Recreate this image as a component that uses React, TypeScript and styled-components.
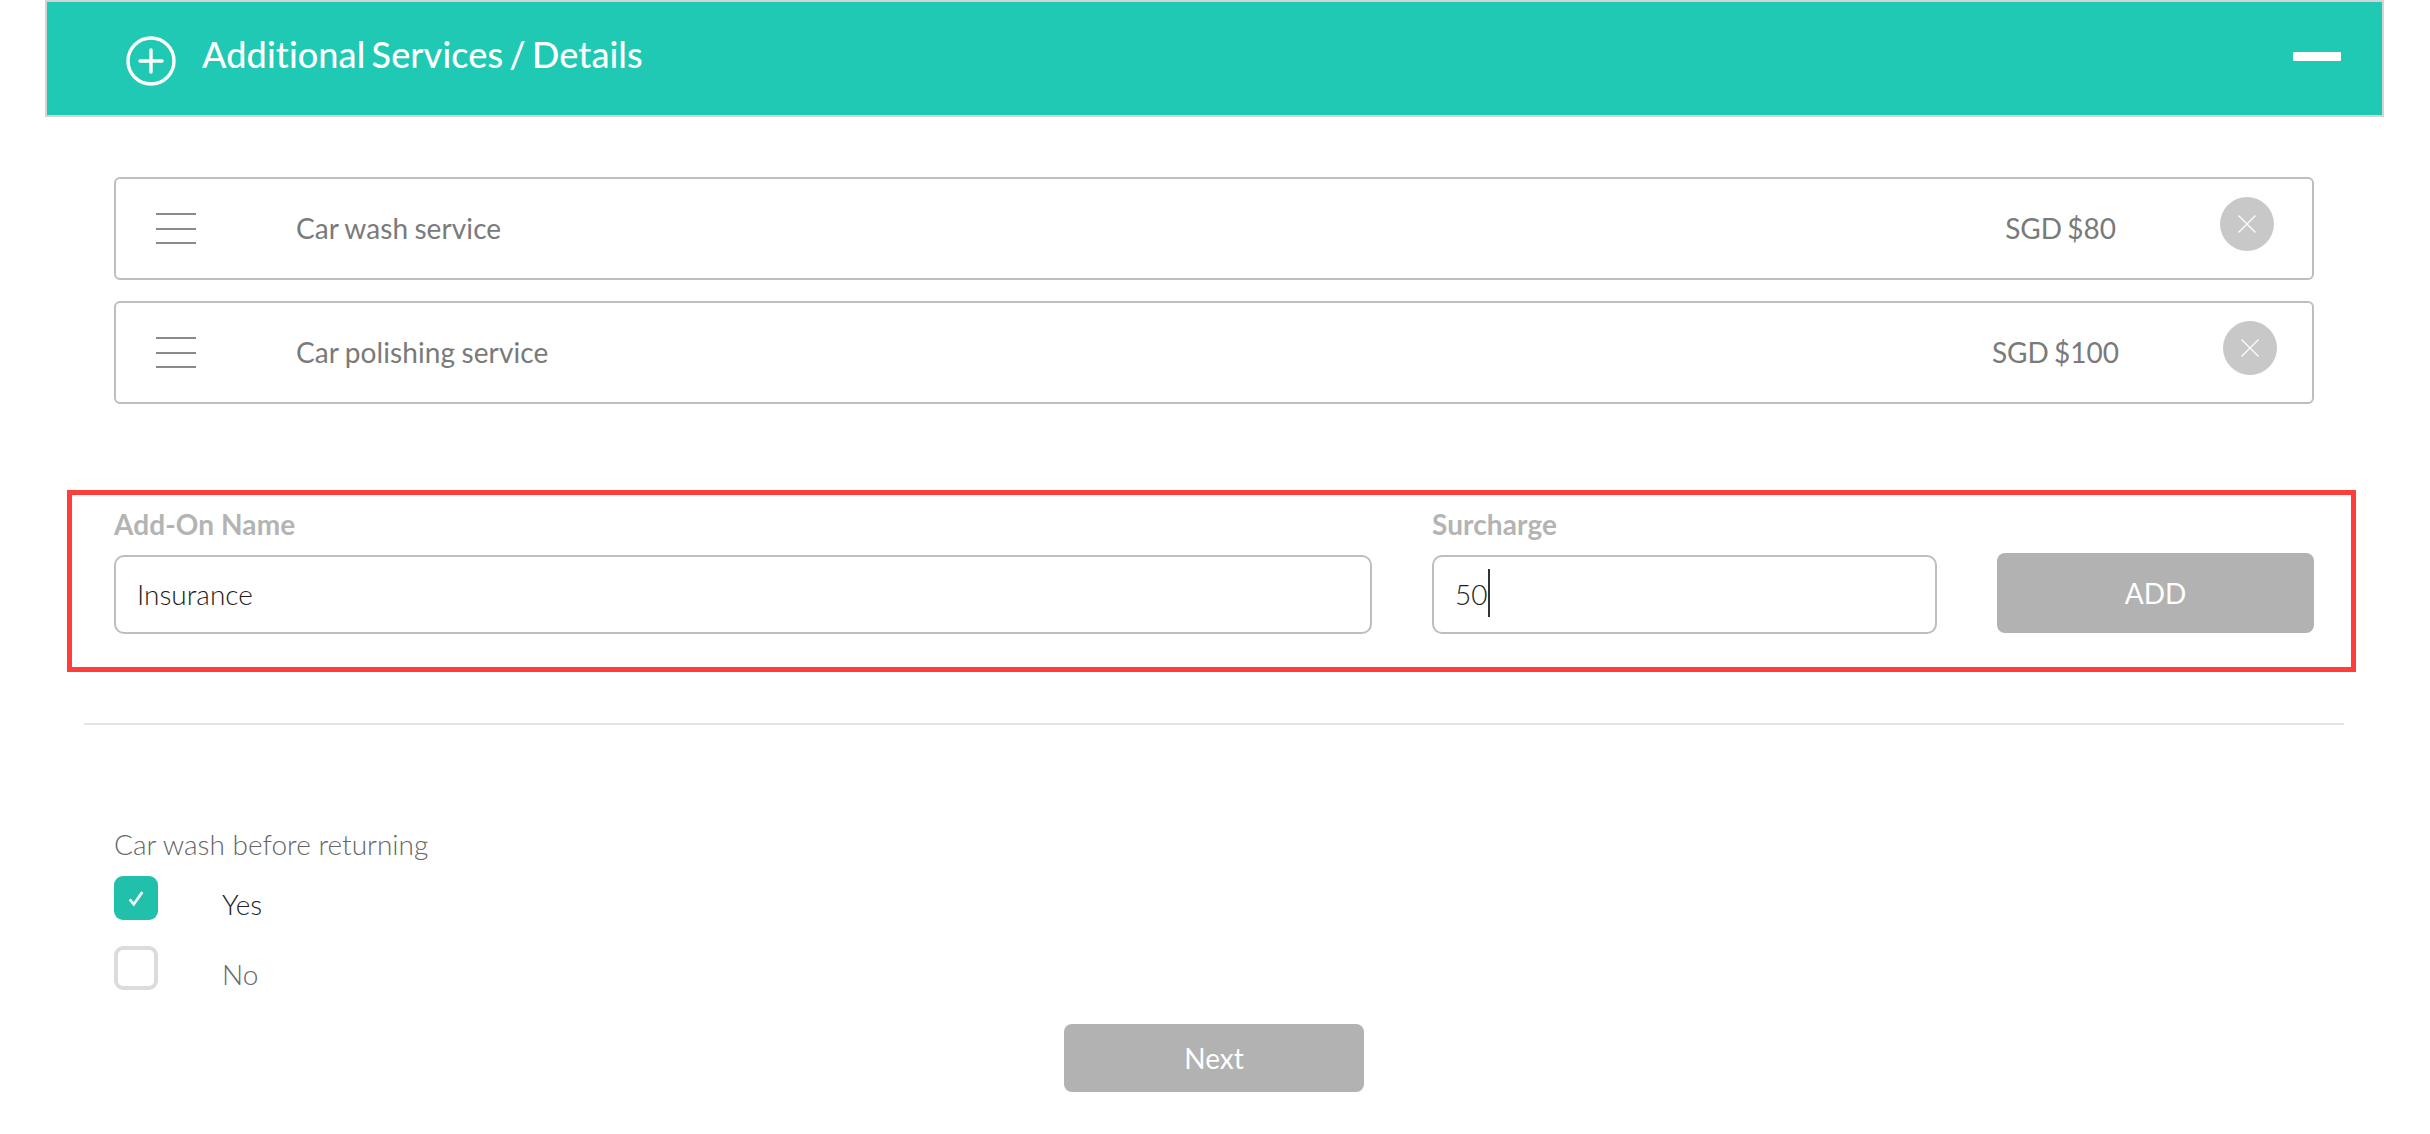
import React from "react";
import styled, { createGlobalStyle } from "styled-components";

const Global = createGlobalStyle`
  html, body { margin: 0; padding: 0; background: #fff; }
  body { font-family: Lato, "Open Sans", "Liberation Sans", sans-serif; }
  * { box-sizing: border-box; }
`;

const Page = styled.div`
  width: 2430px;
  height: 1134px;
  padding: 0 46px 0 45px;
  overflow: hidden;
`;

const Header = styled.header`
  height: 117px;
  display: flex;
  align-items: center;
  background: #20c9b3;
  border: 2px solid #d4d4d4;
  padding: 0 41px 0 79px;
  color: #fff;
`;

const HeaderIcon = styled.svg`
  width: 50px;
  height: 50px;
  margin-top: 4px;
  flex: none;
`;

const Title = styled.h1`
  flex: 1;
  margin: -9px 0 0 26px;
  font-size: 36px;
  font-weight: 500;
  line-height: 44px;
  letter-spacing: 0.1px;
  word-spacing: -3px;
`;

const Collapse = styled.span`
  width: 48px;
  height: 9px;
  background: #fff;
  border-radius: 1px;
  margin-top: -4px;
`;

const Content = styled.main`
  padding: 60px 70px 0 69px;
`;

const List = styled.div`
  display: flex;
  flex-direction: column;
  gap: 21px;
`;

const Card = styled.div<{ $inset: number }>`
  height: 103px;
  display: flex;
  align-items: center;
  border: 2px solid #bebebe;
  border-radius: 6px;
  padding: 0 ${(p) => p.$inset}px 0 40px;
`;

const Burger = styled.span`
  width: 40px;
  height: 31px;
  flex: none;
  display: flex;
  flex-direction: column;
  justify-content: space-between;

  i {
    display: block;
    height: 2px;
    background: #8a8a8a;
  }
`;

const ItemName = styled.span`
  flex: 1;
  margin: -2px 0 0 100px;
  font-size: 28px;
  line-height: 34px;
  color: #7a7a7a;
  letter-spacing: 0.1px;
  word-spacing: -1px;
`;

const Price = styled.span`
  margin-top: -2px;
  font-size: 28px;
  line-height: 34px;
  color: #7a7a7a;
  word-spacing: -2px;
`;

const Remove = styled.span`
  width: 54px;
  height: 54px;
  flex: none;
  margin: -9px 0 0 104px;
  border-radius: 50%;
  background: #c8c8c8;
  display: flex;
  align-items: center;
  justify-content: center;
`;

const Highlight = styled.section`
  margin: 86px -42px 0 -47px;
  height: 182px;
  border: 5px solid #ff3e3c;
  padding: 0 37px 0 42px;
  display: grid;
  grid-template-columns: 1258px 505px 317px;
  column-gap: 60px;
`;

const FieldGroup = styled.div`
  display: flex;
  flex-direction: column;
`;

const FieldLabel = styled.label`
  height: 60px;
  padding-top: 12px;
  font-size: 28px;
  font-weight: 700;
  line-height: 34px;
  color: #b4b4b4;
  letter-spacing: 0.1px;
`;

const Field = styled.div`
  height: 79px;
  display: flex;
  align-items: center;
  border: 2px solid #bebebe;
  border-radius: 10px;
  padding: 0 21px 2px;
  font-size: 28px;
  font-weight: 300;
  color: #1c1c1c;
`;

const Caret = styled.span`
  width: 2px;
  height: 48px;
  margin-left: 1px;
  margin-top: -1px;
  background: #333;
`;

const ActionButton = styled.button`
  border: 0;
  border-radius: 8px;
  background: #b2b2b2;
  color: #fff;
  font-family: inherit;
  font-size: 28px;
  font-weight: 400;
  padding: 0;
`;

const AddButton = styled(ActionButton)`
  height: 80px;
  margin-top: 58px;
`;

const Divider = styled.hr`
  margin: 51px -30px 0 -30px;
  border: 0;
  height: 2px;
  background: #e3e3e3;
`;

const Options = styled.div`
  margin-top: 101px;
`;

const OptionsTitle = styled.div`
  font-size: 28px;
  font-weight: 300;
  line-height: 36px;
  color: #666;
  margin-bottom: 14px;
`;

const Option = styled.div`
  height: 70px;
  display: flex;
  align-items: flex-start;
`;

const Box = styled.span<{ $checked?: boolean }>`
  width: 44px;
  height: 44px;
  flex: none;
  border-radius: 9px;
  display: flex;
  align-items: center;
  justify-content: center;
  background: ${(p) => (p.$checked ? "#20c0ab" : "#fff")};
  border: ${(p) => (p.$checked ? "0" : "4px solid #dcdcdc")};
`;

const OptionText = styled.span<{ $muted?: boolean }>`
  margin: 11px 0 0 64px;
  font-size: 28px;
  font-weight: 300;
  line-height: 34px;
  color: ${(p) => (p.$muted ? "#666" : "#222")};
`;

const Footer = styled.div`
  display: flex;
  justify-content: center;
  margin-top: -3px;
`;

const NextButton = styled(ActionButton)`
  width: 300px;
  height: 68px;
  margin-top: 11px;
`;

const PlusCircle = () => (
  <HeaderIcon viewBox="0 0 50 50" fill="none" stroke="#fff" strokeWidth="3.4">
    <circle cx="25" cy="25" r="23" />
    <path d="M25 14v22M14 25h22" strokeLinecap="round" />
  </HeaderIcon>
);

const Cross = () => (
  <svg width="18" height="18" viewBox="0 0 18 18" stroke="#fff" strokeWidth="1.2">
    <path d="M0.5 0.5l17 17M17.5 0.5l-17 17" />
  </svg>
);

const Check = () => (
  <svg width="18" height="18" viewBox="0 0 20 20" fill="none" stroke="#f4fbfa" strokeWidth="3">
    <path d="M3 11.5l4.5 5.5L17 3.5" />
  </svg>
);

const items = [
  { name: "Car wash service", price: "SGD $80", inset: 38 },
  { name: "Car polishing service", price: "SGD $100", inset: 35 },
];

export default function App() {
  return (
    <Page>
      <Global />
      <Header>
        <PlusCircle />
        <Title>Additional Services / Details</Title>
        <Collapse />
      </Header>
      <Content>
        <List>
          {items.map((item) => (
            <Card key={item.name} $inset={item.inset}>
              <Burger>
                <i />
                <i />
                <i />
              </Burger>
              <ItemName>{item.name}</ItemName>
              <Price>{item.price}</Price>
              <Remove>
                <Cross />
              </Remove>
            </Card>
          ))}
        </List>
        <Highlight>
          <FieldGroup>
            <FieldLabel>Add-On Name</FieldLabel>
            <Field>Insurance</Field>
          </FieldGroup>
          <FieldGroup>
            <FieldLabel>Surcharge</FieldLabel>
            <Field>
              50
              <Caret />
            </Field>
          </FieldGroup>
          <AddButton>ADD</AddButton>
        </Highlight>
        <Divider />
        <Options>
          <OptionsTitle>Car wash before returning</OptionsTitle>
          <Option>
            <Box $checked>
              <Check />
            </Box>
            <OptionText>Yes</OptionText>
          </Option>
          <Option>
            <Box />
            <OptionText $muted>No</OptionText>
          </Option>
        </Options>
        <Footer>
          <NextButton>Next</NextButton>
        </Footer>
      </Content>
    </Page>
  );
}
